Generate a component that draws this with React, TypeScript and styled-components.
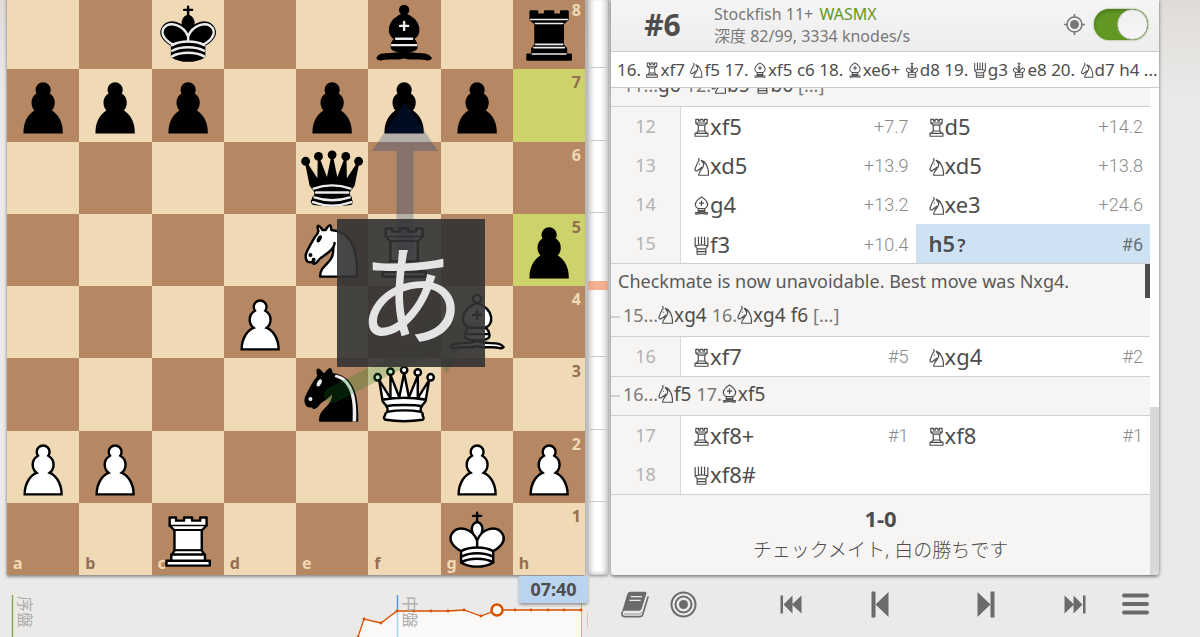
import React from 'react';
import styled, { createGlobalStyle } from 'styled-components';

const GlobalStyle = createGlobalStyle`
  *, *::before, *::after { box-sizing: border-box; }
  body {
    margin: 0;
    color: #4d4d4d;
    background: #ebeae9 linear-gradient(to bottom, #dfdcd8, #ebeae9 100px) no-repeat;
    font-family: "Noto Sans", "Noto Sans CJK JP", sans-serif;
    font-size: 16px;
  }
  button { font: inherit; color: inherit; border: 0; padding: 0; margin: 0; background: none; cursor: pointer; }
`;

/* ---------- board pieces ---------- */

const KNIGHT_BODY = 'M22 10c10.5 1 16.5 8 16 29H15c0-9 10-6.5 8-21';
const KNIGHT_HEAD =
  'M24 18c.38 2.91-5.55 7.37-8 9-3 2-2.82 4.34-5 4-1.04-.94 1.41-3.04 0-3-1 0 .19 1.23-1 2-1 0-4 1-4-4 0-2 6-12 6-12s1.89-1.9 2-3.5c-.73-1-.5-2-.5-3 1-1 3 2.5 3 2.5h2s.78-2 2.5-3c1 0 1 3 1 3';
const KNIGHT_EYES =
  'M9.5 25.5a.5.5 0 1 1-1 0 .5.5 0 1 1 1 0zm5.43-9.75a.5 1.5 30 1 1-.86-.5.5 1.5 30 1 1 .86.5z';
const QUEEN_BASE =
  'M9 26c0 2 1.5 2 2.5 4 1 1.5 1 1 .5 3.5-1.5 1-1.5 2.5-1.5 2.5-1.5 1.5.5 2.5.5 2.5 6.5 1 16.5 1 23 0 0 0 1.5-1 0-2.5 0 0 .5-1.5-1-2.5-.5-2.5-.5-2 .5-3.5 1-2 2.5-2 2.5-4-8.5-1.5-18.5-1.5-27 0z';

const pawn = (
  <path d="M22.500 9c-2.21 0-4 1.79-4 4 0 .89.29 1.71.78 2.38-1.95 1.12-3.28 3.21-3.28 5.62 0 2.03.94 3.84 2.41 5.03-3 1.06-7.41 5.55-7.41 13.47h23c0-7.92-4.41-12.41-7.41-13.47 1.47-1.19 2.41-3 2.41-5.03 0-2.41-1.33-4.5-3.28-5.62.49-.67.78-1.49.78-2.38 0-2.21-1.79-4-4-4z" strokeLinejoin="miter" />
);

const bishop = (detail: string) => (
  <>
    <g strokeLinecap="butt">
      <path d="M9 36c3.4-1 10.1.4 13.5-2 3.4 2.4 10.1 1 13.5 2 0 0 1.6.5 3 2-.7 1-1.6 1-3 .5-3.4-1-10.1.5-13.5-1-3.4 1.5-10.1 0-13.5 1-1.4.5-2.3.5-3-.5 1.4-2 3-2 3-2z" />
      <path d="M15 32c2.5 2.5 12.5 2.5 15 0 .5-1.5 0-2 0-2 0-2.5-2.5-4-2.5-4 5.5-1.5 6-11.5-5-15.5-11 4-10.5 14-5 15.5 0 0-2.5 1.5-2.5 4 0 0-.5.5 0 2z" />
      <path d="M25 8a2.5 2.5 0 1 1-5 0 2.5 2.5 0 1 1 5 0z" />
    </g>
    <path fill="none" stroke={detail} strokeLinejoin="miter" d="M17.5 26h10M15 30h15m-7.5-14.5v5M20 18h5" />
  </>
);

const PIECES: Record<string, React.ReactNode> = {
  bP: pawn,
  wP: pawn,
  bB: bishop('#ececec'),
  wB: bishop('#000'),
  bK: (
    <>
      <path d="M22.5 11.6V6M20 8h5" fill="none" />
      <path strokeLinejoin="miter" d="M22.5 25s4.5-7.5 3-10.5c0 0-1-2.5-3-2.5s-3 2.5-3 2.5c-1.5 3 3 10.5 3 10.5" />
      <path d="M12.5 37c5.5 3.5 14.5 3.5 20 0v-7s9-4.5 6-10.5c-4-6.5-13.5-3.5-16 4V27v-3.5c-2.5-7.5-12-10.5-16-4-3 6 6 10.5 6 10.5v7" />
      <path fill="none" stroke="#ececec" d="M32 29.5s8.5-4 6-9.7C34.1 14 25 18 22.5 24.6v2.1-2.1C20 18 10.9 14 7 19.8c-2.5 5.7 6 9.7 6 9.7" />
      <path fill="none" stroke="#ececec" d="M12.5 30c5.5-3 14.5-3 20 0m-20 3.5c5.5-3 14.5-3 20 0m-20 3.5c5.5-3 14.5-3 20 0" />
    </>
  ),
  wK: (
    <>
      <path d="M22.5 11.6V6M20 8h5" fill="none" />
      <path strokeLinejoin="miter" d="M22.5 25s4.5-7.5 3-10.5c0 0-1-2.5-3-2.5s-3 2.5-3 2.5c-1.5 3 3 10.5 3 10.5" />
      <path d="M12.5 37c5.5 3.5 14.5 3.5 20 0v-7s9-4.5 6-10.5c-4-6.5-13.5-3.5-16 4V27v-3.5c-2.5-7.5-12-10.5-16-4-3 6 6 10.5 6 10.5v7" />
      <path fill="none" d="M12.5 30c5.5-3 14.5-3 20 0m-20 3.5c5.5-3 14.5-3 20 0m-20 3.5c5.5-3 14.5-3 20 0" />
    </>
  ),
  bN: (
    <>
      <path d={KNIGHT_BODY} />
      <path d={KNIGHT_HEAD} />
      <path fill="#ececec" stroke="#ececec" d={KNIGHT_EYES} />
      <path fill="#ececec" stroke="none" d="m24.55 10.4-.45 1.45.5.15c3.15 1 5.65 2.49 7.9 6.75S35.75 29.06 35.25 39l-.05.5h2.25l.05-.5c.5-10.06-.88-16.85-3.25-21.34-2.37-4.49-5.79-6.64-9.19-7.16l-.51-.1z" />
    </>
  ),
  wN: (
    <>
      <path d={KNIGHT_BODY} />
      <path d={KNIGHT_HEAD} />
      <path fill="#000" d={KNIGHT_EYES} />
    </>
  ),
  bQ: (
    <>
      <g stroke="none">
        <circle cx="6" cy="12" r="2.75" />
        <circle cx="14" cy="9" r="2.75" />
        <circle cx="22.5" cy="8" r="2.75" />
        <circle cx="31" cy="9" r="2.75" />
        <circle cx="39" cy="12" r="2.75" />
      </g>
      <path d="M9 26c8.5-1.5 21-1.5 27 0l2.5-12.5L31 25l-.3-14.1-5.2 13.6-3-14.5-3 14.5-5.2-13.6L14 25 6.5 13.5 9 26z" />
      <path d={QUEEN_BASE} />
      <path fill="none" stroke="#ececec" d="M11 29a35 35 1 0 1 23 0m-21.5 2.5h20m-21 3a35 35 1 0 0 22 0m-23 3a35 35 1 0 0 24 0" />
    </>
  ),
  wQ: (
    <>
      <path d="M8 12a2 2 0 1 1-4 0 2 2 0 1 1 4 0zm16.5-4.5a2 2 0 1 1-4 0 2 2 0 1 1 4 0zM41 12a2 2 0 1 1-4 0 2 2 0 1 1 4 0zM16 8.5a2 2 0 1 1-4 0 2 2 0 1 1 4 0zM33 9a2 2 0 1 1-4 0 2 2 0 1 1 4 0z" />
      <path d="M9 26c8.5-1.5 21-1.5 27 0l2-12-7 11V11l-5.5 13.5-3-15-3 15-5.5-14V25L7 14l2 12z" />
      <path d={QUEEN_BASE} />
      <path fill="none" d="M11.5 30c3.5-1 18.5-1 22 0M12 33.5c6-1 15-1 21 0" />
    </>
  ),
  bR: (
    <>
      <path d="M9 39h27v-3H9v3zm3.5-7l1.5-2.5h17l1.5 2.5h-20zm-.5 4v-4h21v4H12z" />
      <path strokeLinejoin="miter" d="M14 29.5v-13h17v13H14z" />
      <path d="M14 16.5L11 14h23l-3 2.5H14zM11 14V9h4v2h5V9h5v2h5V9h4v5H11z" />
      <path fill="none" stroke="#ececec" strokeWidth="1" d="M12 35.5h21m-20-4h19m-18-2h17m-17-13h17M11 14h23" />
    </>
  ),
  wR: (
    <>
      <path d="M9 39h27v-3H9v3zm3-3v-4h21v4H12zm-1-22V9h4v2h5V9h5v2h5V9h4v5" />
      <path d="M34 14l-3 3H14l-3-3" />
      <path strokeLinejoin="miter" d="M31 17v12.5H14V17" />
      <path d="M31 29.5l1.5 2.5h-20l1.5-2.5" />
      <path fill="none" d="M11 14h23M14 17h17M14 29.5h17" strokeWidth="1" />
    </>
  ),
};

const PieceSvg = styled.svg`
  position: relative;
  display: block;
  width: 100%;
  height: 100%;
`;

const Piece = ({ code }: { code: string }) => (
  <PieceSvg viewBox="0 0 45 45" fill={code[0] === 'w' ? '#fff' : '#000'} fillRule="evenodd" stroke="#000" strokeWidth="1.5" strokeLinejoin="round" strokeLinecap="round">
    {PIECES[code]}
  </PieceSvg>
);

/* ---------- page ---------- */

const Page = styled.main`
  display: grid;
  grid-template-columns: minmax(0, 578fr) 20px minmax(0, 548fr);
  grid-template-rows: auto 1fr;
  column-gap: 3px;
  min-height: 100vh;
  padding: 0 41px 0 7px;
  overflow: hidden;
`;

const BoardBox = styled.section`
  position: relative;
  aspect-ratio: 1;
  margin-top: -3px;
  box-shadow: 0 2px 3px rgba(0, 0, 0, 0.35), 0 0 4px rgba(0, 0, 0, 0.2);
`;

const Squares = styled.div`
  display: grid;
  grid-template: repeat(8, minmax(0, 1fr)) / repeat(8, minmax(0, 1fr));
  height: 100%;
`;

const Square = styled.div<{ $dark: boolean; $last: boolean }>`
  position: relative;
  background: ${(p) => (p.$last ? '#cdd26a' : p.$dark ? '#b58863' : '#f0d9b5')};
  color: ${(p) => (p.$dark ? '#f0d9b5' : '#946f51')};
`;

const Coord = styled.span<{ $rank?: boolean }>`
  position: absolute;
  ${(p) => (p.$rank ? 'top: 3px; right: 4px;' : 'bottom: 2px; left: 6px;')}
  font-size: 16px;
  line-height: 20px;
  font-weight: 700;
`;

const Arrows = styled.svg`
  position: absolute;
  inset: 0;
  width: 100%;
  height: 100%;
`;

const Kana = styled.div`
  position: absolute;
  left: 57.1%;
  top: 38.4%;
  width: 148px;
  height: 148px;
  background: rgba(50, 50, 51, 0.9);
  color: #e4e4e4;
  font: 108px/140px "Noto Sans CJK JP", sans-serif;
  text-align: center;
`;

const POSITION = [
  '. . bK . . bB . bR',
  'bP bP bP . bP bP bP .',
  '. . . . bQ . . .',
  '. . . . wN wR . bP',
  '. . . wP . . wB .',
  '. . . . bN wQ . .',
  'wP wP . . . . wP wP',
  '. . wR . . . wK .',
].map((row) => row.split(' '));

const LAST_MOVE = ['h7', 'h5'];

const Board = () => (
  <BoardBox>
    <Squares>
      {POSITION.flatMap((row, r) =>
        row.map((code, f) => {
          const file = 'abcdefgh'[f];
          const rank = 8 - r;
          return (
            <Square key={file + rank} $dark={(r + f) % 2 === 1} $last={LAST_MOVE.includes(file + rank)}>
              {f === 7 && <Coord $rank>{rank}</Coord>}
              {r === 7 && <Coord>{file}</Coord>}
              {code !== '.' && <Piece code={code} />}
            </Square>
          );
        }),
      )}
    </Squares>
    <Arrows viewBox="0 0 578 578">
      <path d="M389.500 253V154H365L398 105L431 154H406.500V253A8.500 8.500 0 0 1 389.500 253Z" fill="#003088" opacity=".25" />
      <g transform="translate(325 398) rotate(-26.600)" fill="#15781b" opacity=".25">
        <path d="M0 -8H112V-32L161 0L112 32V8H0A8 8 0 0 1 0 -8Z" />
      </g>
    </Arrows>
    <Kana>あ</Kana>
  </BoardBox>
);

const Gauge = styled.div`
  display: grid;
  grid-template-rows: repeat(8, minmax(0, 1fr));
  margin-top: -3px;
  background: #fff;
  box-shadow: inset 3px 0 5px rgba(0, 0, 0, 0.22), inset -3px 0 5px rgba(0, 0, 0, 0.2), 0 1px 3px rgba(0, 0, 0, 0.4);
`;

const Tick = styled.div<{ $zero: boolean }>`
  border-bottom: ${(p) => (p.$zero ? '9px solid rgba(239, 150, 110, 0.75)' : '1px solid #c9cacd')};
  margin-bottom: ${(p) => (p.$zero ? '-4px' : '1px')};
  &:last-child { border-bottom: 0; }
`;

/* ---------- figurines inside move text ---------- */

const FIGURINES: Record<string, React.ReactNode> = {
  R: <path d="M1.800 1.500v3.600l2.200 1.700v5.400l-1.800 2H1.100V17h11.800v-2.800h-1.100l-1.800-2V6.800l2.200-1.700V1.500H9.700v1.600H8.200V1.500H5.800v1.600H4.300V1.500zM2 4.900h10M4 6.800h6M4 12.200h6M2.200 14.300h9.600" />,
  N: <path d="M4.400 1.200 4.800 3.600C2.600 5.800 2.600 8.200 1.200 10.800c-.6 1.600.6 2.800 2 2l4.400-3.400M3.200 12.600l3-1.400M9 6.600c.6 5-5 5.800-4.600 10.400h9C13.700 10 11 4.600 6.800 3.400zM4.400 17h9M4.600 6.800h.9" />,
  B: <path d="M7 1.200C3.600 3.200 1.400 6 1.400 8.200c0 1.800 1.200 3 2.400 3.600h6.400c1.200-.6 2.400-1.800 2.400-3.600C12.600 6 10.400 3.200 7 1.200zM7 4.400v5M4.600 6.900h4.800M3.800 11.800c.6 1 .6 1.800-.2 2.800M10.200 11.800c-.6 1-.6 1.800.2 2.800M3.600 14.600C4.600 13.400 9.400 13.400 10.400 14.600M1 15.800c2.400-1 4 0 6-1.400 2 1.400 3.600.4 6 1.400M1.200 17c2.200-.8 4 0 5.800-1 1.800 1 3.600.2 5.800 1" />,
  Q: <path d="M1.200 2v7.600l1.800 2V17h8v-5.400l1.800-2V2M4.200 1.200V9M7 1v8M9.800 1.200V9M1.200 9.400c3-1 8.600-1 11.600 0M3 12h8M3 14.600h8M.6 2h1.200M3.600 1.500h1.200M6.400 1.300h1.200M9.200 1.500h1.200M12.200 2h1.200" />,
  K: <path d="M7 .8v4M5.400 2.200h3.200M7 12V7.400M7 12C5.400 6.800 1.200 5.400 1 8.600c0 1.800 2 3 2 3V17h8v-5.400s2-1.200 2-3C12.800 5.400 8.600 6.800 7 12zM7 7.800C5.600 6.400 6 4.800 7 4.800s1.400 1.600 0 3zM3 12c2-.8 6-.8 8 0M3 14.600c2-.8 6-.8 8 0" />,
};

const FigurineSvg = styled.svg<{ $small?: boolean }>`
  display: inline-block;
  width: ${(p) => (p.$small ? '14px' : '15px')};
  height: ${(p) => (p.$small ? '16px' : '19px')};
  vertical-align: -2px;
  margin-right: 1px;
`;

const San = ({ move, small }: { move: string; small?: boolean }) => {
  const figurine = FIGURINES[move[0]];
  if (!figurine) return <>{move}</>;
  return (
    <>
      <FigurineSvg $small={small} viewBox="0.400 0.300 13.200 17.400" fill="none" stroke="currentColor" strokeWidth="1.100" strokeLinejoin="round" role="img" aria-label={move[0]}>
        {figurine}
      </FigurineSvg>
      {move.slice(1)}
    </>
  );
};

/* ---------- analysis panel ---------- */

const Panel = styled.section`
  display: flex;
  flex-direction: column;
  min-width: 0;
  background: #fff;
  border-radius: 0 0 4px 4px;
  box-shadow: 0 2px 3px rgba(0, 0, 0, 0.35), 0 0 4px rgba(0, 0, 0, 0.25);
  overflow: hidden;
`;

const EngineBar = styled.header`
  display: flex;
  align-items: center;
  height: 52px;
  padding: 0 11px 2px 0;
  background: linear-gradient(to bottom, #f5f5f5, #ededed);
  border-bottom: 1px solid #ccc;
`;

const Score = styled.strong`
  width: 103px;
  text-align: center;
  font-size: 30px;
  line-height: 40px;
`;

const EngineInfo = styled.div`
  flex: 1;
  min-width: 0;
  color: #787878;
  font-size: 16px;
  line-height: 22px;
  em { font-style: normal; color: #629924; margin-left: 2px; }
`;

const ThreatButton = styled.button`
  display: flex;
  margin-right: 9px;
  color: #787878;
`;

const Toggle = styled.input`
  appearance: none;
  display: flex;
  justify-content: flex-end;
  width: 54px;
  height: 31px;
  margin: 0;
  border-radius: 16px;
  background: #629924;
  box-shadow: 0 0 2px #629924, inset 0 2px 4px rgba(0, 0, 0, 0.25);
  cursor: pointer;
  &::before {
    content: '';
    width: 31px;
    height: 31px;
    border: 1px solid #b5b5b5;
    border-radius: 50%;
    background: linear-gradient(to bottom, #efefef, #f6f6f6);
  }
`;

const PvLine = styled.div`
  height: 36px;
  padding: 0 0 0 6px;
  border-bottom: 1px solid #ccc;
  font-size: 17px;
  line-height: 35px;
  white-space: nowrap;
  overflow: hidden;
`;

const ListFrame = styled.div`
  display: flex;
  flex: 1 1 0;
  min-height: 0;
`;

const MoveList = styled.div`
  flex: 1;
  min-width: 0;
  min-height: 0;
  display: flex;
  flex-direction: column;
  justify-content: flex-end;
  overflow: hidden;
  > * { flex-shrink: 0; }
`;

const ScrollTrack = styled.div`
  display: flex;
  align-items: flex-end;
  width: 9px;
  background: #fff;
  &::after {
    content: '';
    width: 9px;
    height: 168px;
    background: #d9d9d9;
  }
`;

const Row = styled.div`
  display: grid;
  grid-template-columns: 70px minmax(0, 1fr) minmax(0, 1fr);
  height: 39px;
`;

const Index = styled.span`
  background: #f6f5f4;
  border-right: 1px solid #d9d9d9;
  color: #b3b3b3;
  font-size: 18px;
  line-height: 39px;
  text-align: center;
`;

const Move = styled.button<{ $active?: boolean }>`
  display: flex;
  align-items: center;
  justify-content: space-between;
  padding: 0 7px 0 13px;
  font-size: 22px;
  line-height: 39px;
  font-weight: ${(p) => (p.$active ? 600 : 400)};
  background: ${(p) => (p.$active ? '#cfe2f4' : 'transparent')};
  small { font-size: 18px; margin-left: 2px; }
`;

const Eval = styled.span<{ $active?: boolean }>`
  font-family: Roboto, sans-serif;
  font-weight: ${(p) => (p.$active ? 400 : 300)};
  font-size: 18px;
  color: ${(p) => (p.$active ? '#6b7075' : '#8a8a8a')};
`;

const Interrupt = styled.div`
  background: #f6f5f4;
  border: solid #d0d0d0;
  border-width: 1px 0;
`;

const Comment = styled.p`
  margin: 0;
  padding: 0 7px;
  border-right: 5px solid #4d4d4d;
  font-size: 18px;
  line-height: 34px;
  color: #595959;
`;

const Line = styled.div`
  display: flex;
  align-items: baseline;
  height: 38px;
  padding-left: 3px;
  font-size: 19px;
  line-height: 34px;
  white-space: pre;
  &::before {
    content: '';
    align-self: center;
    width: 9px;
    height: 2px;
    margin-left: -3px;
    margin-right: 3px;
    background: #d0d0d0;
  }
`;

const LineIndex = styled.span`
  color: #787878;
  font-size: 18px;
`;

const Result = styled.div`
  height: 81px;
  padding-top: 7px;
  text-align: center;
  font-size: 19px;
  line-height: 32px;
  background: #f6f5f4;
  border-top: 1px solid #d0d0d0;
  p { margin: 0; font-weight: 300; }
  strong { display: block; font-size: 22px; }
`;

type HalfMove = { san: string; score?: string; glyph?: string; active?: boolean };

const MoveRow = ({ n, moves }: { n: number; moves: HalfMove[] }) => (
  <Row>
    <Index>{n}</Index>
    {moves.map((m) => (
      <Move key={m.san + m.score} $active={m.active}>
        <span>
          <San move={m.san} />
          {m.glyph && <small>{m.glyph}</small>}
        </span>
        {m.score && <Eval $active={m.active}>{m.score}</Eval>}
      </Move>
    ))}
  </Row>
);

const Variation = ({ parts }: { parts: string[] }) => (
  <Line>
    {parts.map((part, i) =>
      /^\d|^\[/.test(part) ? (
        <LineIndex key={i}>{part}</LineIndex>
      ) : (
        <span key={i}>
          <San move={part} />
        </span>
      ),
    )}
  </Line>
);

const PV = '16. Rxf7 Nf5 17. Bxf5 c6 18. Bxe6+ Kd8 19. Qg3 Ke8 20. Nd7 h4 ...'.split(' ');

const Analysis = () => (
  <Panel>
    <EngineBar>
      <Score>#6</Score>
      <EngineInfo>
        Stockfish 11+ <em>WASMX</em>
        <br />
        深度 82/99, 3334 knodes/s
      </EngineInfo>
      <ThreatButton aria-label="Show threat">
        <svg width="21" height="21" viewBox="0 0 21 21" fill="none" stroke="currentColor" strokeWidth="1.600">
          <circle cx="10.500" cy="10.500" r="7.500" />
          <circle cx="10.500" cy="10.500" r="4.500" fill="currentColor" stroke="none" />
          <path d="M10.500 0v4M10.500 17v4M0 10.500h4M17 10.500h4" />
        </svg>
      </ThreatButton>
      <Toggle type="checkbox" defaultChecked aria-label="Toggle local evaluation" />
    </EngineBar>
    <PvLine>
      {PV.map((m, i) => (
        <React.Fragment key={i}>
          <San move={m} small />{' '}
        </React.Fragment>
      ))}
    </PvLine>
    <ListFrame>
      <MoveList>
        <Interrupt>
          <Variation parts={['11...', 'g6', ' ', '12.', 'Nb5', ' ', 'Qb6', ' ', '[...]']} />
        </Interrupt>
        <MoveRow n={12} moves={[{ san: 'Rxf5', score: '+7.7' }, { san: 'Rd5', score: '+14.2' }]} />
        <MoveRow n={13} moves={[{ san: 'Nxd5', score: '+13.9' }, { san: 'Nxd5', score: '+13.8' }]} />
        <MoveRow n={14} moves={[{ san: 'Bg4', score: '+13.2' }, { san: 'Nxe3', score: '+24.6' }]} />
        <MoveRow n={15} moves={[{ san: 'Qf3', score: '+10.4' }, { san: 'h5', score: '#6', glyph: '?', active: true }]} />
        <Interrupt>
          <Comment>Checkmate is now unavoidable. Best move was Nxg4.</Comment>
          <Variation parts={['15...', 'Nxg4', ' ', '16.', 'Nxg4', ' ', 'f6', ' ', '[...]']} />
        </Interrupt>
        <MoveRow n={16} moves={[{ san: 'Rxf7', score: '#5' }, { san: 'Nxg4', score: '#2' }]} />
        <Interrupt>
          <Variation parts={['16...', 'Nf5', ' ', '17.', 'Bxf5']} />
        </Interrupt>
        <MoveRow n={17} moves={[{ san: 'Rxf8+', score: '#1' }, { san: 'Rxf8', score: '#1' }]} />
        <MoveRow n={18} moves={[{ san: 'Qxf8#' }]} />
        <Result>
          <strong>1-0</strong>
          <p>チェックメイト, 白の勝ちです</p>
        </Result>
      </MoveList>
      <ScrollTrack />
    </ListFrame>
  </Panel>
);

/* ---------- bottom strip ---------- */

const Timeline = styled.section`
  position: relative;
  min-height: 62px;
  margin-left: -7px;
`;

const ChartSvg = styled.svg`
  display: block;
  width: 100%;
  height: 62px;
`;

const Phase = styled.span<{ $left: string }>`
  position: absolute;
  top: 21px;
  left: ${(p) => p.$left};
  color: #adadad;
  font-size: 16px;
  line-height: 20px;
  writing-mode: vertical-rl;
  text-orientation: sideways;
`;

const Clock = styled.time`
  position: absolute;
  top: 1px;
  right: -3px;
  width: 69px;
  background: #bad4f0;
  border-radius: 0 0 3px 3px;
  box-shadow: 0 2px 3px rgba(0, 0, 0, 0.35);
  font-size: 18px;
  font-weight: 700;
  line-height: 27px;
  text-align: center;
`;

const SERIES = [
  [358, 62], [364, 44], [381, 48], [397, 36], [414, 36], [431, 36], [448, 36], [464, 35],
  [481, 41], [497, 35], [515, 35], [531, 35], [548, 35], [564, 35], [581, 35],
];
const SERIES_LINE = SERIES.map(([x, y]) => `${x} ${y}`).join('L');

const Chart = () => (
  <Timeline>
    <ChartSvg viewBox="0 0 585 62" preserveAspectRatio="none">
      <path d={`M${SERIES_LINE}V62Z`} fill="#faf9f8" />
      <path d="M12.500 20V62" stroke="#7fae4c" strokeWidth="1.500" />
      <path d="M397.500 20V36" stroke="#4f9be0" strokeWidth="1.500" />
      <path d="M397.500 36V62" stroke="#a9d3ee" strokeWidth="1.500" />
      <path d="M581.500 28V62" stroke="#d3b56a" />
      <path d={`M${SERIES_LINE}`} fill="none" stroke="#d85000" strokeWidth="1.300" />
      {SERIES.map(([x, y]) => (
        <circle key={x} cx={x} cy={y} r="1.400" fill="#d85000" />
      ))}
      <circle cx="497" cy="35" r="5.500" fill="#fff" stroke="#d85000" strokeWidth="2.500" />
    </ChartSvg>
    <Phase $left="15px">序盤</Phase>
    <Phase $left="400px">中盤</Phase>
    <Clock>07:40</Clock>
  </Timeline>
);

const TimelineEnd = styled.div`
  width: 1px;
  height: 16px;
  margin-top: 37px;
  margin-left: -1px;
  background: #cfc8bb;
`;

const Toolbar = styled.nav`
  display: flex;
  height: 58px;
  color: #6b6b6b;
`;

const ToolGroup = styled.div<{ $wide?: boolean }>`
  display: flex;
  ${(p) => (p.$wide ? 'flex: 1;' : 'width: 144px;')}
`;

const ToolButton = styled.button<{ $grow?: number }>`
  display: flex;
  align-items: center;
  justify-content: center;
  ${(p) => (p.$grow ? `flex: ${p.$grow} 1 0;` : 'flex: 0 0 48px;')}
  svg { display: block; }
`;

const EdgeIcon = ({ flip }: { flip?: boolean }) => (
  <svg width="22" height="19" viewBox="0 0 22 19" fill="currentColor">
    <path transform={flip ? 'matrix(-1 0 0 1 22 0)' : undefined} d="M.500.500h2.500v18H.500zM3.500 9.500 12.500.500V18.500zM12 9.500 21.500.500V18.500z" />
  </svg>
);

const StepIcon = ({ flip }: { flip?: boolean }) => (
  <svg width="18" height="27" viewBox="0 0 18 27" fill="currentColor">
    <path transform={flip ? 'matrix(-1 0 0 1 18 0)' : undefined} d="M1 .500h3q.500 0 .500.500v25q0 .500-.500.500H1Q.500 26.500.500 26V1Q.500.500 1 .500zM4.500 13.500 17.500 1V26z" />
  </svg>
);

const Tools = () => (
  <Toolbar>
    <ToolGroup>
      <ToolButton aria-label="Opening explorer">
        <svg width="28" height="27" viewBox="48 303 84 81">
          <path d="M76 305H119q7 0 5 7L110 356q-2 6-8 6H60q-6 0-10 7L66 315q3-10 10-10z" fill="currentColor" />
          <path d="M52 366q-4 14 8 14H104q7 0 9-6L129 321" fill="none" stroke="currentColor" strokeWidth="5" strokeLinecap="round" />
          <path d="M77 320H111M73 331H107" stroke="#ebeae9" strokeWidth="4" />
          <path d="M57 372H103q5 0 7-6" fill="none" stroke="currentColor" strokeWidth="2" />
        </svg>
      </ToolButton>
      <ToolButton aria-label="Practice with computer">
        <svg width="27" height="27" viewBox="0 0 27 27" fill="none" stroke="currentColor" strokeWidth="2">
          <circle cx="13.500" cy="13.500" r="12" />
          <circle cx="13.500" cy="13.500" r="8" />
          <circle cx="13.500" cy="13.500" r="4.500" fill="currentColor" stroke="none" />
        </svg>
      </ToolButton>
    </ToolGroup>
    <ToolGroup $wide>
      <ToolButton $grow={2} aria-label="First move"><EdgeIcon /></ToolButton>
      <ToolButton $grow={3} aria-label="Previous move"><StepIcon /></ToolButton>
      <ToolButton $grow={3} aria-label="Next move"><StepIcon flip /></ToolButton>
      <ToolButton $grow={2} aria-label="Last move"><EdgeIcon flip /></ToolButton>
    </ToolGroup>
    <ToolButton aria-label="Menu">
      <svg width="27" height="22" viewBox="0 0 27 22" stroke="currentColor" strokeWidth="4" strokeLinecap="round">
        <path d="M2 2.500H25M2 11H25M2 19.500H25" />
      </svg>
    </ToolButton>
  </Toolbar>
);

export default function App() {
  return (
    <>
      <GlobalStyle />
      <Page>
        <Board />
        <Gauge>
          {Array.from({ length: 8 }, (_, i) => (
            <Tick key={i} $zero={i === 3} />
          ))}
        </Gauge>
        <Analysis />
        <Chart />
        <TimelineEnd />
        <Tools />
      </Page>
    </>
  );
}
